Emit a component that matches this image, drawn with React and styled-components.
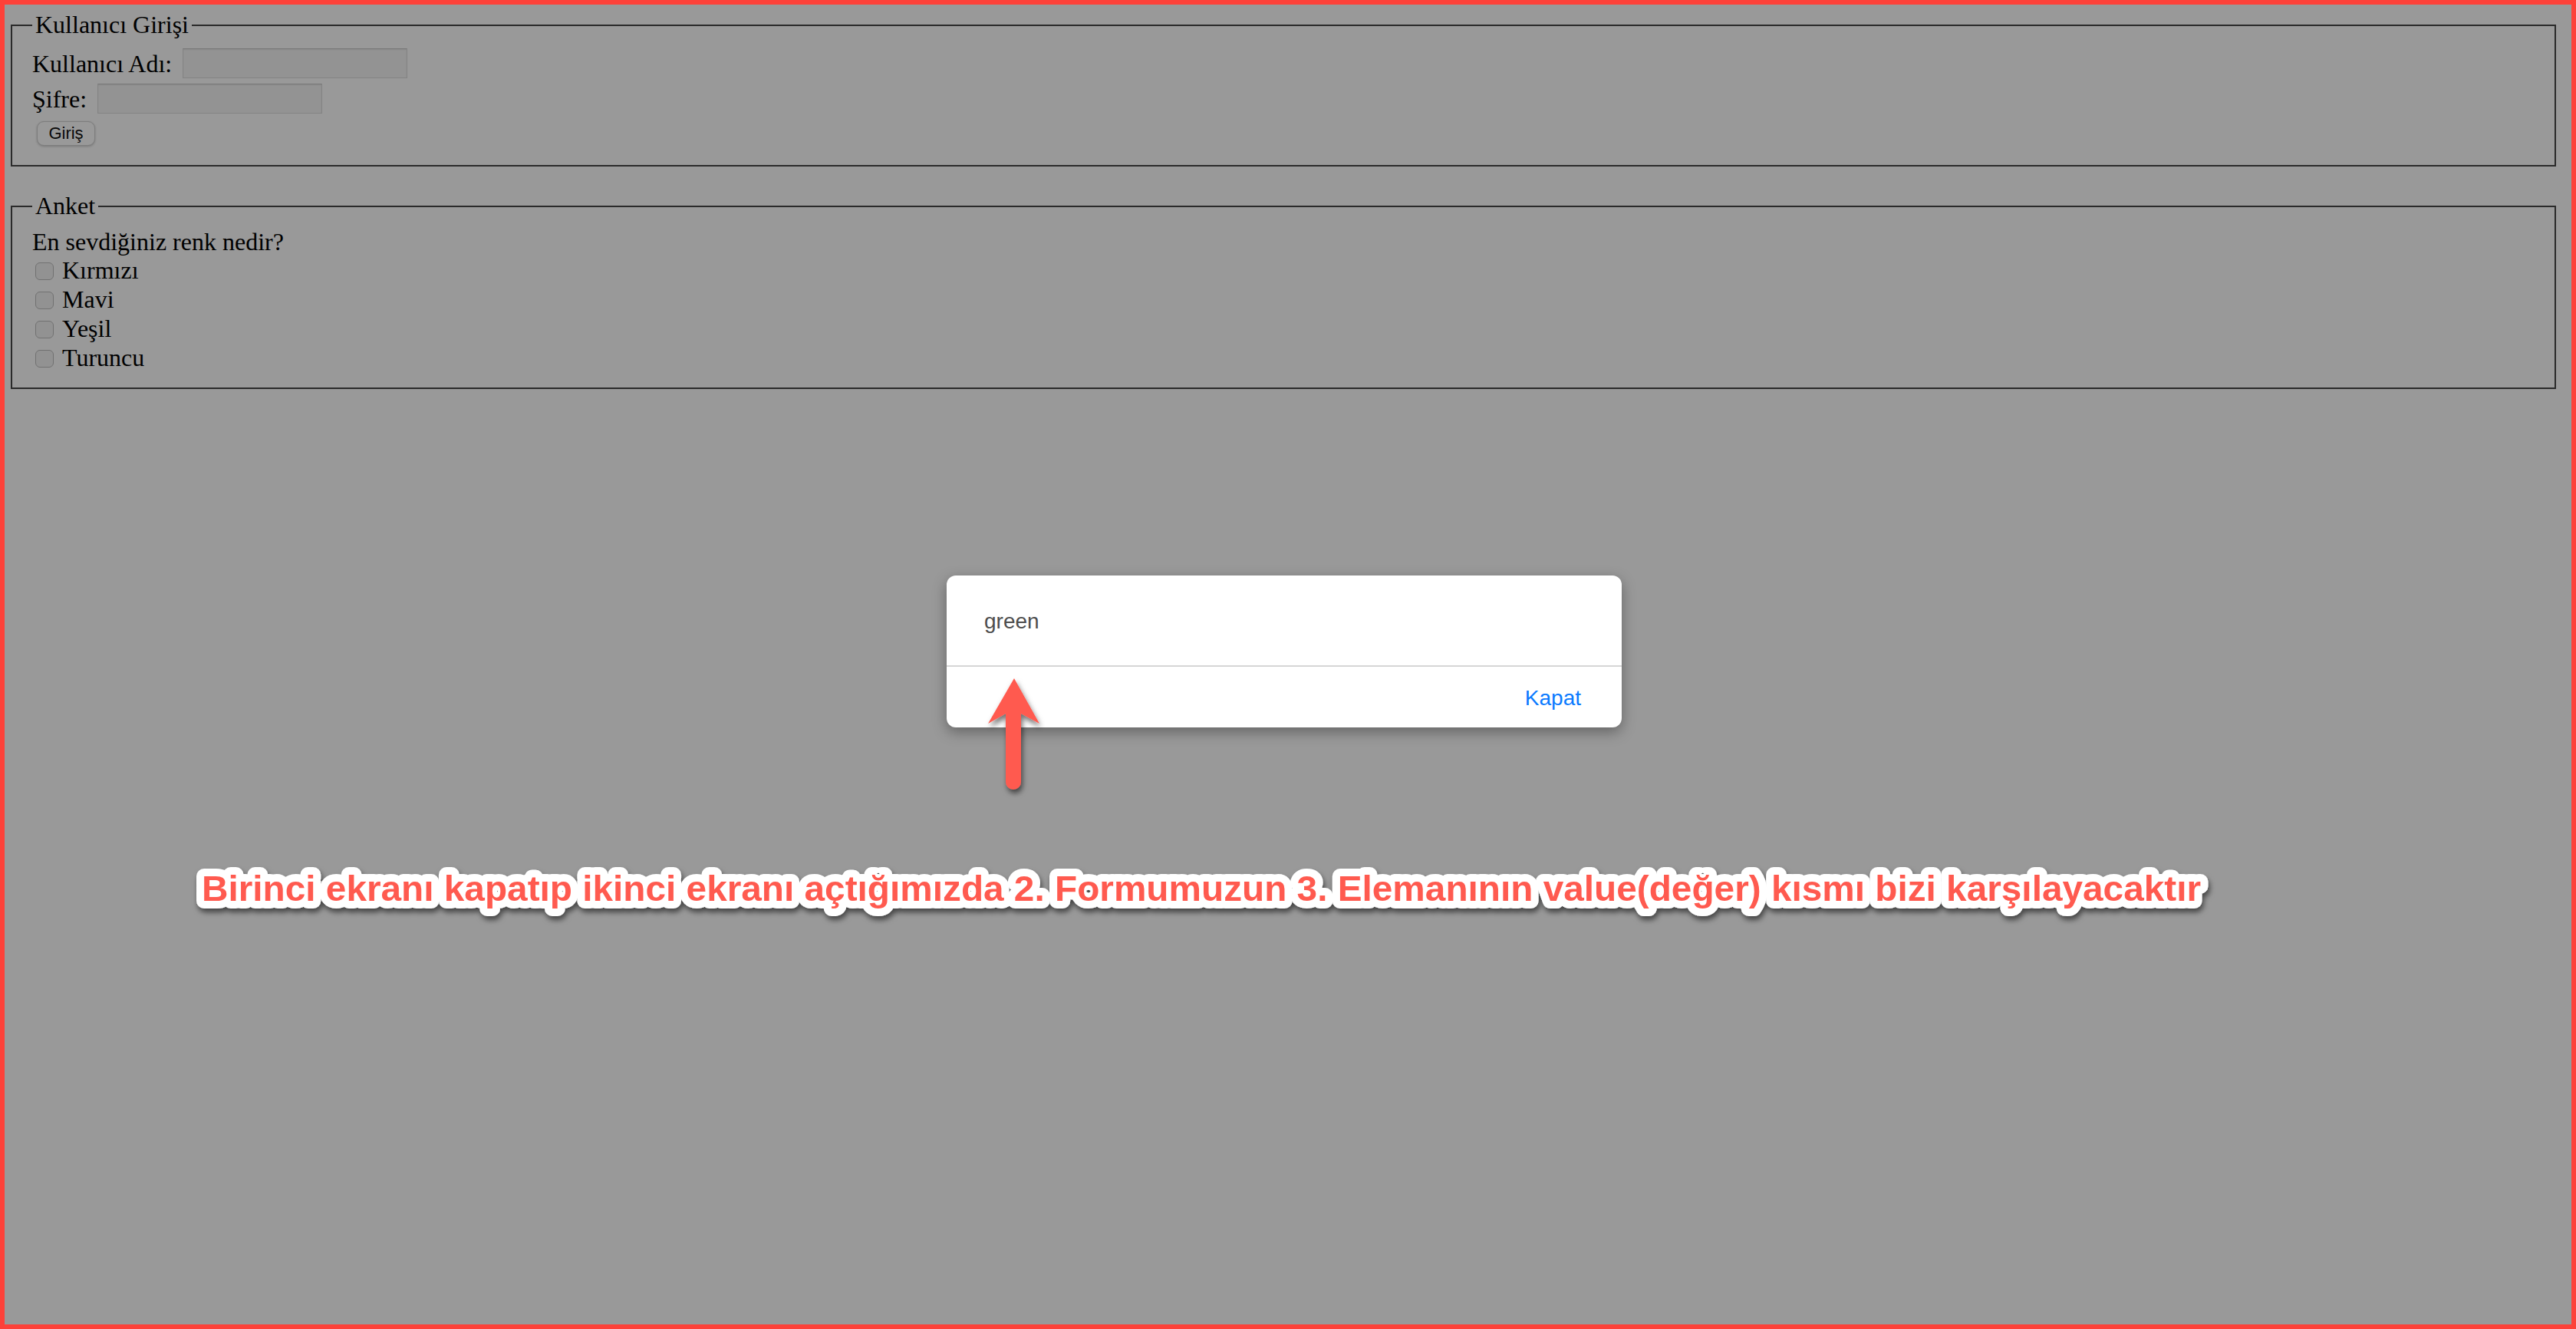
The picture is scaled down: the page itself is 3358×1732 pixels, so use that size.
import React from 'react'
import styled, { createGlobalStyle } from 'styled-components'

const GlobalStyle = createGlobalStyle`
    html, body {
        margin: 0;
        padding: 0;
        overflow: hidden;
        background: #ffffff;
    }
`

const Screen = styled.div`
    position: relative;
    width: 3358px;
    height: 1732px;
    box-sizing: border-box;
    padding: 6px;
    background: #ffffff;
    overflow: hidden;
    font-family: "Liberation Serif", "Times New Roman", serif;
    color: #000000;
`

const Page = styled.main`
    padding: 8px 20px 0 8px;
`

const Fieldset = styled.fieldset`
    margin: ${p => (p.$spaced ? '33px 0 0 0' : '0')};
    border: 2px solid #474747;
    padding: ${p => p.$pad};
    min-width: 0;
`

const Legend = styled.legend`
    font-size: 32px;
    line-height: 37px;
    padding: 0 4px;
`

const Row = styled.div`
    display: flex;
    align-items: center;
    height: 46px;
    font-size: 32px;
    line-height: 37px;
`

const Label = styled.label`
    margin-right: 14px;
    padding-top: 2px;
`

const TextInput = styled.input`
    box-sizing: border-box;
    width: 293px;
    height: 39px;
    margin: 0;
    border: 1px solid #dcdcdc;
    border-top-color: #c8c8c8;
    background: #f6f6f6;
    box-shadow: inset 0 1px 2px rgba(0, 0, 0, 0.08);
    outline: none;
`

const Button = styled.button`
    box-sizing: border-box;
    width: 76px;
    height: 32px;
    margin-left: 6px;
    padding: 0;
    border: 1px solid #d0d0d0;
    border-radius: 9px;
    background: #ffffff;
    box-shadow: 0 1px 3px rgba(0, 0, 0, 0.22);
    font-family: "Liberation Sans", Arial, sans-serif;
    font-size: 22px;
    color: #111111;
`

const Question = styled.div`
    font-size: 32px;
    line-height: 36px;
`

const CheckRow = styled.div`
    display: flex;
    align-items: center;
    height: 38px;
    font-size: 32px;
    line-height: 38px;
`

const Check = styled.input`
    appearance: none;
    box-sizing: border-box;
    width: 24px;
    height: 23px;
    margin: 2px 11px 0 4px;
    border: 1px solid #bdbdbd;
    border-radius: 6px;
    background: #f4f4f4;
`

const Backdrop = styled.div`
    position: absolute;
    inset: 0;
    background: rgba(0, 0, 0, 0.4);
`

const Dialog = styled.div`
    position: absolute;
    left: 1234px;
    top: 750px;
    width: 880px;
    height: 198px;
    display: flex;
    flex-direction: column;
    background: #ffffff;
    border-radius: 12px;
    box-shadow: 0 6px 18px rgba(0, 0, 0, 0.35);
    font-family: "Liberation Sans", Arial, sans-serif;
    font-size: 28px;
    overflow: hidden;
`

const DialogBody = styled.div`
    display: flex;
    align-items: center;
    height: 117px;
    box-sizing: border-box;
    padding: 3px 0 0 49px;
    color: #4d4d4d;
`

const DialogFooter = styled.div`
    display: flex;
    align-items: center;
    justify-content: flex-end;
    flex: 1;
    padding: 3px 53px 0 0;
    border-top: 2px solid #d6d6d6;
`

const CloseLink = styled.span`
    color: #0a7aff;
`

const Annotations = styled.svg`
    position: absolute;
    inset: 0;
    pointer-events: none;
`

const Frame = styled.div`
    position: absolute;
    inset: 0;
    border: 6px solid #fd4139;
    pointer-events: none;
`

const colors = ['Kırmızı', 'Mavi', 'Yeşil', 'Turuncu']

const App = () => {
    return (
        <>
            <GlobalStyle />
            <Screen>
                <Page>
                    <Fieldset $pad="8px 24px 18px 26px">
                        <Legend>Kullanıcı Girişi</Legend>
                        <Row>
                            <Label>Kullanıcı Adı:</Label>
                            <TextInput type="text" />
                        </Row>
                        <Row>
                            <Label>Şifre:</Label>
                            <TextInput type="password" />
                        </Row>
                        <Row>
                            <Button>Giriş</Button>
                        </Row>
                    </Fieldset>

                    <Fieldset $spaced $pad="10px 24px 20px 26px">
                        <Legend>Anket</Legend>
                        <Question>En sevdiğiniz renk nedir?</Question>
                        {colors.map(c => (
                            <CheckRow key={c}>
                                <Check type="checkbox" />
                                <span>{c}</span>
                            </CheckRow>
                        ))}
                    </Fieldset>
                </Page>

                <Backdrop />

                <Dialog>
                    <DialogBody>green</DialogBody>
                    <DialogFooter>
                        <CloseLink>Kapat</CloseLink>
                    </DialogFooter>
                </Dialog>

                <Annotations width="3358" height="1732" viewBox="0 0 3358 1732">
                    <defs>
                        <filter id="markShadow" x="-10%" y="-30%" width="120%" height="180%">
                            <feDropShadow dx="2" dy="5" stdDeviation="3.5" floodColor="#000" floodOpacity="0.55" />
                        </filter>
                    </defs>
                    <path
                        d="M1322 884 L1355 943 L1331 930 L1331 1019 A10 10 0 0 1 1311 1019 L1311 930 L1288 943 Z"
                        fill="#ff5a4f"
                        filter="url(#markShadow)"
                    />
                    <text
                        x="263"
                        y="1174"
                        fontFamily="'Liberation Sans', Arial, sans-serif"
                        fontWeight="700"
                        fontSize="47"
                        textLength="2606"
                        lengthAdjust="spacingAndGlyphs"
                        fill="#ff5a4f"
                        stroke="#ffffff"
                        strokeWidth="20"
                        strokeLinejoin="round"
                        paintOrder="stroke"
                        filter="url(#markShadow)"
                    >
                        Birinci ekranı kapatıp ikinci ekranı açtığımızda 2. Formumuzun 3. Elemanının value(değer) kısmı bizi karşılayacaktır
                    </text>
                </Annotations>

                <Frame />
            </Screen>
        </>
    )
}

export default App
